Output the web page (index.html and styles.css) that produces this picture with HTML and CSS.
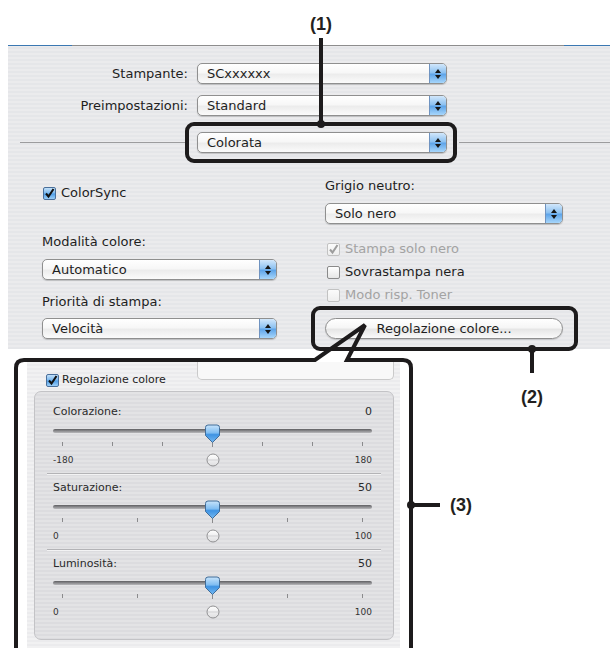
FILE: index.html
```html
<!DOCTYPE html>
<html lang="it">
<head>
  <meta charset="UTF-8">
  <title>Regolazione colore</title>
  <link rel="stylesheet" href="styles.css">
</head>
<body>
  <div class="page">
    <div class="panel">
      <div class="panel-rule"></div>

      <div class="form">
        <label>Stampante:</label>
        <div class="popup"><span>SCxxxxxx</span><i class="arrows"></i></div>
        <label>Preimpostazioni:</label>
        <div class="popup"><span>Standard</span><i class="arrows"></i></div>
      </div>

      <div class="sep-row">
        <div class="line left"></div>
        <div class="popup"><span>Colorata</span><i class="arrows"></i></div>
        <div class="line right"></div>
      </div>

      <div class="options">
        <div class="col">
          <div class="check on sync">
            <b class="box"><svg viewBox="0 0 11 11"><path d="M2 5.5l2.5 3L9.5 1"/></svg></b>ColorSync
          </div>
          <div class="caption mode">Modalità colore:</div>
          <div class="popup p-mode"><span>Automatico</span><i class="arrows"></i></div>
          <div class="caption prio">Priorità di stampa:</div>
          <div class="popup p-prio"><span>Velocità</span><i class="arrows"></i></div>
        </div>
        <div class="col">
          <div class="caption">Grigio neutro:</div>
          <div class="popup p-grey"><span>Solo nero</span><i class="arrows"></i></div>
          <div class="check on off c1">
            <b class="box"><svg viewBox="0 0 11 11"><path d="M2 5.5l2.5 3L9.5 1"/></svg></b>Stampa solo nero
          </div>
          <div class="check c2"><b class="box"></b>Sovrastampa nera</div>
          <div class="check off c3"><b class="box"></b>Modo risp. Toner</div>
          <div class="button">Regolazione colore...</div>
        </div>
      </div>
    </div>

    <div class="detail">
      <div class="detail-head">
        <div class="check on small">
          <b class="box"><svg viewBox="0 0 11 11"><path d="M2 5.5l2.5 3L9.5 1"/></svg></b>Regolazione colore
        </div>
        <div class="tab"></div>
      </div>

      <div class="group">
        <div class="sect">
          <div class="sect-head"><span>Colorazione:</span><span>0</span></div>
          <svg class="slider" viewBox="0 0 319 34">
            <defs>
              <linearGradient id="track" x1="0" y1="0" x2="0" y2="1">
                <stop offset="0" stop-color="#5f5f62"/>
                <stop offset="1" stop-color="#b9b9bc"/>
              </linearGradient>
              <linearGradient id="thumb" x1="0" y1="0" x2="0" y2="1">
                <stop offset="0" stop-color="#c8e4fb"/>
                <stop offset="0.45" stop-color="#7fbdf2"/>
                <stop offset="0.55" stop-color="#3f93e2"/>
                <stop offset="1" stop-color="#74b9f3"/>
              </linearGradient>
              <linearGradient id="knob" x1="0" y1="0" x2="0" y2="1">
                <stop offset="0" stop-color="#ffffff"/>
                <stop offset="1" stop-color="#dedee0"/>
              </linearGradient>
            </defs>
            <rect x="0" y="10" width="319" height="4" rx="2" fill="url(#track)"/>
            <path class="ticks" d="M9.5 23v4M59.5 23v4M109.5 23v4M159.5 23v5M209.5 23v4M259.5 23v4M309.5 23v4"/>
            <path class="thumb" d="M152.5 8.5q0-2.5 2.5-2.5h9q2.5 0 2.5 2.5v8l-7 7l-7-7z"/>
          </svg>
          <div class="sect-foot">
            <span>-180</span>
            <svg class="knob" viewBox="0 0 14 14"><circle cx="7" cy="7" r="6"/><path d="M2 7h10"/></svg>
            <span class="end">180</span>
          </div>
        </div>
        <div class="rule"></div>

        <div class="sect">
          <div class="sect-head"><span>Saturazione:</span><span>50</span></div>
          <svg class="slider" viewBox="0 0 319 34">
            <rect x="0" y="10" width="319" height="4" rx="2" fill="url(#track)"/>
            <path class="ticks" d="M9.5 23v4M84.5 23v4M159.5 23v5M234.5 23v4M309.5 23v4"/>
            <path class="thumb" d="M152.5 8.5q0-2.5 2.5-2.5h9q2.5 0 2.5 2.5v8l-7 7l-7-7z"/>
          </svg>
          <div class="sect-foot">
            <span>0</span>
            <svg class="knob" viewBox="0 0 14 14"><circle cx="7" cy="7" r="6"/><path d="M2 7h10"/></svg>
            <span class="end">100</span>
          </div>
        </div>
        <div class="rule"></div>

        <div class="sect">
          <div class="sect-head"><span>Luminosità:</span><span>50</span></div>
          <svg class="slider" viewBox="0 0 319 34">
            <rect x="0" y="10" width="319" height="4" rx="2" fill="url(#track)"/>
            <path class="ticks" d="M9.5 23v4M84.5 23v4M159.5 23v5M234.5 23v4M309.5 23v4"/>
            <path class="thumb" d="M152.5 8.5q0-2.5 2.5-2.5h9q2.5 0 2.5 2.5v8l-7 7l-7-7z"/>
          </svg>
          <div class="sect-foot">
            <span>0</span>
            <svg class="knob" viewBox="0 0 14 14"><circle cx="7" cy="7" r="6"/><path d="M2 7h10"/></svg>
            <span class="end">100</span>
          </div>
        </div>
      </div>
    </div>

    <!-- callout frames drawn over the screenshot -->
    <svg class="callouts" viewBox="0 0 610 648">
      <rect x="187" y="124" width="268" height="37" rx="7"/>
      <path d="M321 38V124"/>
      <circle cx="321" cy="124" r="4"/>
      <rect x="313" y="308" width="263" height="41" rx="7"/>
      <path d="M532 349V373"/>
      <circle cx="532" cy="349" r="4"/>
      <path d="M16 660V368q0-8 8-8H315L365 325L347 360H403q8 0 8 8V660"/>
      <path d="M411 505H440"/>
      <circle cx="411" cy="505" r="4"/>
    </svg>
    <span class="tag tag1">(1)</span>
    <span class="tag tag2">(2)</span>
    <span class="tag tag3">(3)</span>
  </div>
</body>
</html>
```

FILE: styles.css
```css
body {
  margin: 0;
  background: #fff;
  font-family: "DejaVu Sans", sans-serif;
  color: #1e1e1e;
}
.page {
  position: relative;
  width: 610px;
  height: 648px;
  overflow: hidden;
}

/* print dialog panel */
.panel {
  margin: 45px 0 0 8px;
  padding-bottom: 10px;
  background: repeating-linear-gradient(#ebebed 0 2px, #e5e6e9 2px 4px);
}
.panel-rule {
  height: 1px;
  background: linear-gradient(to right, #3b78b2 0 64px, #8d8d8d 64px 556px, #3b78b2 556px);
}
.form {
  display: grid;
  grid-template-columns: 180px 250px;
  column-gap: 9px;
  row-gap: 11px;
  align-items: center;
  padding-top: 17px;
  font-size: 13px;
}
.form label {
  text-align: right;
}

.popup {
  display: flex;
  align-items: center;
  height: 21px;
  box-sizing: border-box;
  border: 1px solid #8f8f8f;
  border-radius: 5px;
  overflow: hidden;
  background: linear-gradient(#ffffff, #f7f7f7 45%, #ececec 55%, #fbfbfb);
  box-shadow: 0 1px 1px rgba(0,0,0,0.18);
  font-size: 13px;
}
.popup span {
  flex: 1;
  padding-left: 9px;
}
.arrows {
  align-self: stretch;
  width: 16px;
  display: flex;
  flex-direction: column;
  align-items: center;
  justify-content: center;
  gap: 2px;
  background: linear-gradient(#d2e7fb, #8cc1f1 46%, #5ea4e9 54%, #a7d6fb);
  border-left: 1px solid #6f93c0;
}
.arrows::before,
.arrows::after {
  content: "";
  width: 0;
  height: 0;
  border-left: 3px solid transparent;
  border-right: 3px solid transparent;
}
.arrows::before {
  border-bottom: 4px solid #151515;
}
.arrows::after {
  border-top: 4px solid #151515;
}

.sep-row {
  display: flex;
  align-items: center;
  margin-top: 16px;
}
.sep-row .popup {
  width: 250px;
}
.line {
  height: 1px;
  background: #9c9c9e;
}
.line.left {
  width: 165px;
  margin: 0 12px;
}
.line.right {
  flex: 1;
  margin-left: 12px;
}

.options {
  display: grid;
  grid-template-columns: 235px 238px;
  column-gap: 48px;
  padding: 25px 0 0 34px;
  font-size: 13px;
}
.col {
  display: flex;
  flex-direction: column;
}
.caption {
  line-height: 16px;
}
.check {
  display: flex;
  align-items: center;
  gap: 5px;
  line-height: 16px;
}
.check .box {
  display: flex;
  width: 13px;
  height: 13px;
  box-sizing: border-box;
  border: 1px solid #8a8a8a;
  border-radius: 2px;
  background: linear-gradient(#ffffff, #e6e6e6);
}
.check .box svg {
  width: 11px;
  height: 11px;
  fill: none;
  stroke: #111;
  stroke-width: 2;
}
.check.on .box {
  border-color: #4a6f9b;
  background: linear-gradient(#c2e0f9, #79b7ee 48%, #4c9be6 52%, #9ccff8);
}
.check.off {
  color: #a3a3a3;
}
.check.off .box {
  border-color: #c2c2c2;
  background: linear-gradient(#fbfbfb, #eeeeee);
}
.check.off .box svg {
  stroke: #9d9d9d;
}

.sync { margin: 7px 0 0 1px; }
.mode { margin-top: 33px; }
.p-mode { margin-top: 9px; }
.prio { margin-top: 14px; }
.p-prio { margin-top: 8px; }
.p-grey { margin-top: 9px; }
.c1 { margin: 17px 0 0 2px; }
.c2, .c3 { margin: 7px 0 0 2px; }

.button {
  margin-top: 15px;
  height: 21px;
  box-sizing: border-box;
  border: 1px solid #8e8e8e;
  border-radius: 11px;
  background: linear-gradient(#ffffff, #f6f6f6 45%, #e6e6e6 55%, #fafafa);
  box-shadow: 0 1px 1px rgba(0,0,0,0.15);
  text-align: center;
  line-height: 19px;
}

/* enlarged colour adjustment pane */
.detail {
  width: 373px;
  height: 286px;
  box-sizing: border-box;
  margin: 13px 0 0 27px;
  padding: 0 6px 0 7px;
  background: repeating-linear-gradient(#f1f1f2 0 2px, #ebebed 2px 4px);
  font-size: 11px;
}
.detail-head {
  display: flex;
  align-items: flex-start;
  height: 29px;
}
.check.small {
  margin: 11px 0 0 12px;
  gap: 3px;
  line-height: 14px;
}
.tab {
  margin-left: auto;
  width: 197px;
  height: 18px;
  box-sizing: border-box;
  border: 1px solid #cacaca;
  border-top: 0;
  border-radius: 0 0 5px 5px;
  background: #f8f8f8;
}
.group {
  height: 249px;
  box-sizing: border-box;
  padding-top: 13px;
  border: 1px solid #c3c3c6;
  border-radius: 7px;
  background: repeating-linear-gradient(#e3e3e5 0 2px, #dcdcdf 2px 4px);
}
.sect {
  padding: 0 21px 0 18px;
}
.sect-head {
  display: flex;
  justify-content: space-between;
  line-height: 14px;
  color: #2a2a2a;
}
.slider {
  display: block;
  width: 319px;
  height: 34px;
}
.ticks {
  stroke: #8a8a8c;
  stroke-width: 1;
}
.thumb {
  fill: url(#thumb);
  stroke: #416c98;
}
.sect-foot {
  display: grid;
  grid-template-columns: 1fr auto 1fr;
  align-items: center;
  height: 14px;
  font-size: 9px;
  color: #333;
}
.sect-foot .end {
  justify-self: end;
}
.knob {
  width: 14px;
  height: 14px;
}
.knob circle {
  fill: url(#knob);
  stroke: #909092;
}
.knob path {
  stroke: #cfcfd1;
}
.rule {
  height: 1px;
  margin: 6px 12px;
  background: #b3b3b6;
  border-bottom: 1px solid #f3f3f4;
}

/* annotations */
.callouts {
  position: absolute;
  left: 0;
  top: 0;
  width: 610px;
  height: 648px;
  pointer-events: none;
  fill: none;
  stroke: #1d1b1c;
  stroke-width: 4;
}
.callouts circle {
  fill: #1d1b1c;
  stroke: none;
}
.tag {
  position: absolute;
  font: bold 18px "Liberation Sans", Arial, sans-serif;
  line-height: 21px;
  color: #231f20;
}
.tag1 { left: 310px; top: 14px; }
.tag2 { left: 521px; top: 387px; }
.tag3 { left: 450px; top: 495px; }
```
